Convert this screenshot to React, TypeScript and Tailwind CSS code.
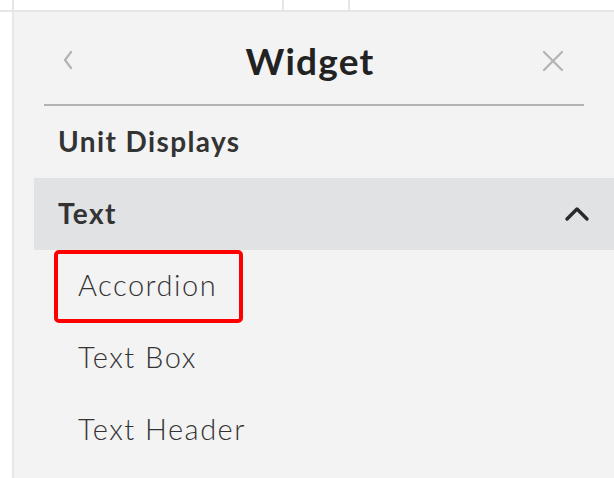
import React from 'react';

const font = { fontFamily: 'Lato, "Noto Sans", sans-serif' };

const items = ['Accordion', 'Text Box', 'Text Header'];

const App = () => {
  return (
    <div className="w-[614px] h-[478px] bg-white flex flex-col overflow-hidden" style={font}>
      {/* top strip of the grid behind the panel */}
      <div className="flex h-[12px] shrink-0 border-b-2 border-[#e6e6e6]">
        <div className="w-[14px] border-r-2 border-[#e6e6e6]"></div>
        <div className="w-[270px] border-r-2 border-[#e6e6e6]"></div>
        <div className="w-[66px] border-r-2 border-[#e6e6e6]"></div>
        <div className="flex-1"></div>
      </div>

      <div className="flex flex-1">
        <div className="w-[14px] border-r-2 border-[#e6e6e6]"></div>
        <div className="flex-1 bg-[#f3f3f3] flex flex-col">
          {/* header */}
          <div className="mx-[30px] h-[94px] border-b-2 border-[#b3b3b3] flex items-center justify-between">
            <svg width="12" height="20" viewBox="0 0 12 20" className="ml-[18px] mt-[4px]">
              <path d="M9 2 L3 10 L9 18" fill="none" stroke="#b3b3b3" strokeWidth="2.2" strokeLinecap="round" />
            </svg>
            <div className="text-[37px] font-bold text-[#222] tracking-[1.2px] ml-[4px] mt-[5px]">Widget</div>
            <svg width="22" height="22" viewBox="0 0 22 22" className="mr-[20px] mt-[6px]">
              <path d="M2 2 L20 20 M20 2 L2 20" fill="none" stroke="#b3b3b3" strokeWidth="2.2" strokeLinecap="round" />
            </svg>
          </div>

          <div className="h-[72px] ml-[20px] pl-[24px] pb-[2px] flex items-center text-[28px] font-bold text-[#333] tracking-[1.4px]">
            Unit Displays
          </div>

          <div className="h-[72px] ml-[20px] pl-[24px] pr-[24px] flex items-center justify-between bg-[#e1e2e4] text-[28px] font-bold text-[#333] tracking-[1.4px]">
            <span className="pb-[2px]">Text</span>
            <svg width="26" height="16" viewBox="0 0 26 16">
              <path d="M3 13 L13 3 L23 13" fill="none" stroke="#2a2a2a" strokeWidth="3.4" strokeLinecap="round" strokeLinejoin="round" />
            </svg>
          </div>

          <div className="ml-[40px] flex flex-col">
            {items.map((item, i) => (
              <div
                key={item}
                className={
                  i === 0
                    ? 'h-[73px] w-[189px] flex items-center pl-[20px] pb-[3px] border-4 border-[#ff0000] rounded-[5px] text-[29px] font-light text-[#333] tracking-[1.5px]'
                    : 'h-[72px] flex items-center pl-[24px] pb-[4px] text-[29px] font-light text-[#333] tracking-[1.5px]'
                }
              >
                {item}
              </div>
            ))}
          </div>
        </div>
      </div>
    </div>
  );
};

export default App;
